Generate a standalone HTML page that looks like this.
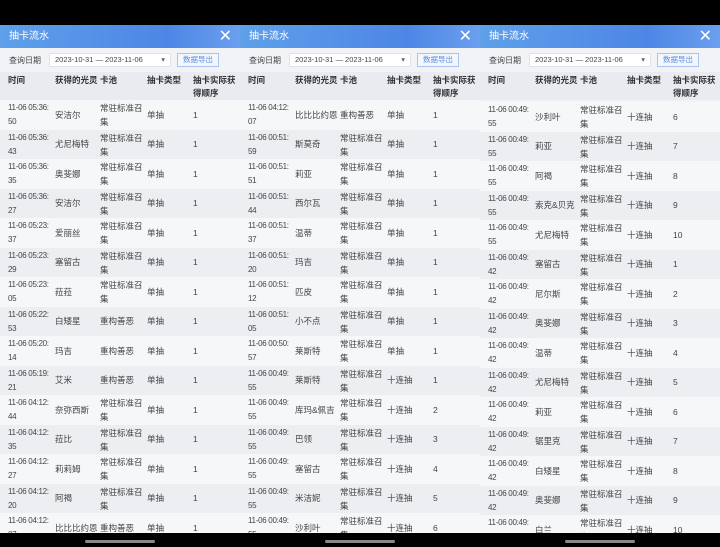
<!DOCTYPE html>
<html><head><meta charset="utf-8"><style>
*{margin:0;padding:0;box-sizing:border-box}
body{width:720px;height:547px;background:#000;position:relative;overflow:hidden;font-family:"Liberation Sans","Noto Sans CJK SC",sans-serif;color:#333}
.p{position:absolute;top:25px;width:240px;height:508px;background:#f2f3f7;overflow:hidden}
.hd{height:23px;background:linear-gradient(90deg,#5ea0ea,#4d86e6 70%,#6aa0ee);color:#fff;font-size:10px;line-height:23px;padding-left:9px;position:relative}
.hd i{position:absolute;right:8px;top:0;font-style:normal;font-size:16px;font-weight:300}
.ct{height:24px;font-size:8px;display:flex;align-items:center;padding-left:9px;color:#444}
.dt{margin-left:8px;width:122px;height:14px;background:#fff;border:1px solid #e0e2e8;font-size:7.5px;line-height:12px;padding-left:5px;position:relative}
.dt:after{content:"▾";position:absolute;right:5px;top:0;color:#666}
.bt{margin-left:6px;width:42px;height:14px;border:1px solid #a9c4ee;color:#5b8ee0;background:#f3f7fd;font-size:7.5px;line-height:12px;text-align:center}
.th{height:28px;background:#e9ebf1;position:relative;font-size:8.5px;font-weight:bold;color:#333}
.r{height:29.5px;position:relative;font-size:8.5px;color:#444}
.r:nth-child(odd){background:#f6f7f9}.r:nth-child(even){background:#eceef2}
.c{position:absolute;line-height:14px;white-space:normal}
.a{left:8px;top:1px;width:47px;font-size:8px;letter-spacing:-0.3px}.b{left:55px;white-space:nowrap}.d{left:100px;top:1px;width:45px}.e{left:147px}.f{left:193px}
.m{top:7.5px}
.th .c{top:2px;line-height:13px;font-size:8.5px;letter-spacing:0}
.bar{position:absolute;bottom:4px;width:70px;height:3px;border-radius:2px;background:#888}
</style></head><body>

<div class="p" style="left:0">
<div class="hd">抽卡流水<i>✕</i></div>
<div class="ct">查询日期<div class="dt">2023-10-31 — 2023-11-06</div><div class="bt">数据导出</div></div>
<div class="th"><span class="c a" style="top:2px">时间</span><span class="c b">获得的光灵</span><span class="c d">卡池</span><span class="c e">抽卡类型</span><span class="c f" style="width:46px">抽卡实际获得顺序</span></div>
<div>
<div class="r"><span class="c a">11-06 05:36: 50</span><span class="c b m">安洁尔</span><span class="c d">常驻标准召集</span><span class="c e m">单抽</span><span class="c f m">1</span></div>
<div class="r"><span class="c a">11-06 05:36: 43</span><span class="c b m">尤尼梅特</span><span class="c d">常驻标准召集</span><span class="c e m">单抽</span><span class="c f m">1</span></div>
<div class="r"><span class="c a">11-06 05:36: 35</span><span class="c b m">奥斐娜</span><span class="c d">常驻标准召集</span><span class="c e m">单抽</span><span class="c f m">1</span></div>
<div class="r"><span class="c a">11-06 05:36: 27</span><span class="c b m">安洁尔</span><span class="c d">常驻标准召集</span><span class="c e m">单抽</span><span class="c f m">1</span></div>
<div class="r"><span class="c a">11-06 05:23: 37</span><span class="c b m">爱丽丝</span><span class="c d">常驻标准召集</span><span class="c e m">单抽</span><span class="c f m">1</span></div>
<div class="r"><span class="c a">11-06 05:23: 29</span><span class="c b m">塞留古</span><span class="c d">常驻标准召集</span><span class="c e m">单抽</span><span class="c f m">1</span></div>
<div class="r"><span class="c a">11-06 05:23: 05</span><span class="c b m">菈菈</span><span class="c d">常驻标准召集</span><span class="c e m">单抽</span><span class="c f m">1</span></div>
<div class="r"><span class="c a">11-06 05:22: 53</span><span class="c b m">白矮星</span><span class="c d m">重构善恶</span><span class="c e m">单抽</span><span class="c f m">1</span></div>
<div class="r"><span class="c a">11-06 05:20: 14</span><span class="c b m">玛吉</span><span class="c d m">重构善恶</span><span class="c e m">单抽</span><span class="c f m">1</span></div>
<div class="r"><span class="c a">11-06 05:19: 21</span><span class="c b m">艾米</span><span class="c d m">重构善恶</span><span class="c e m">单抽</span><span class="c f m">1</span></div>
<div class="r"><span class="c a">11-06 04:12: 44</span><span class="c b m">奈弥西斯</span><span class="c d">常驻标准召集</span><span class="c e m">单抽</span><span class="c f m">1</span></div>
<div class="r"><span class="c a">11-06 04:12: 35</span><span class="c b m">菈比</span><span class="c d">常驻标准召集</span><span class="c e m">单抽</span><span class="c f m">1</span></div>
<div class="r"><span class="c a">11-06 04:12: 27</span><span class="c b m">莉莉姆</span><span class="c d">常驻标准召集</span><span class="c e m">单抽</span><span class="c f m">1</span></div>
<div class="r"><span class="c a">11-06 04:12: 20</span><span class="c b m">阿褐</span><span class="c d">常驻标准召集</span><span class="c e m">单抽</span><span class="c f m">1</span></div>
<div class="r"><span class="c a">11-06 04:12: 07</span><span class="c b m">比比比约恩</span><span class="c d m">重构善恶</span><span class="c e m">单抽</span><span class="c f m">1</span></div>
</div></div>

<div class="p" style="left:240px">
<div class="hd">抽卡流水<i>✕</i></div>
<div class="ct">查询日期<div class="dt">2023-10-31 — 2023-11-06</div><div class="bt">数据导出</div></div>
<div class="th"><span class="c a" style="top:2px">时间</span><span class="c b">获得的光灵</span><span class="c d">卡池</span><span class="c e">抽卡类型</span><span class="c f" style="width:46px">抽卡实际获得顺序</span></div>
<div>
<div class="r"><span class="c a">11-06 04:12: 07</span><span class="c b m">比比比约恩</span><span class="c d m">重构善恶</span><span class="c e m">单抽</span><span class="c f m">1</span></div>
<div class="r"><span class="c a">11-06 00:51: 59</span><span class="c b m">斯莫奇</span><span class="c d">常驻标准召集</span><span class="c e m">单抽</span><span class="c f m">1</span></div>
<div class="r"><span class="c a">11-06 00:51: 51</span><span class="c b m">莉亚</span><span class="c d">常驻标准召集</span><span class="c e m">单抽</span><span class="c f m">1</span></div>
<div class="r"><span class="c a">11-06 00:51: 44</span><span class="c b m">西尔瓦</span><span class="c d">常驻标准召集</span><span class="c e m">单抽</span><span class="c f m">1</span></div>
<div class="r"><span class="c a">11-06 00:51: 37</span><span class="c b m">温蒂</span><span class="c d">常驻标准召集</span><span class="c e m">单抽</span><span class="c f m">1</span></div>
<div class="r"><span class="c a">11-06 00:51: 20</span><span class="c b m">玛吉</span><span class="c d">常驻标准召集</span><span class="c e m">单抽</span><span class="c f m">1</span></div>
<div class="r"><span class="c a">11-06 00:51: 12</span><span class="c b m">匹皮</span><span class="c d">常驻标准召集</span><span class="c e m">单抽</span><span class="c f m">1</span></div>
<div class="r"><span class="c a">11-06 00:51: 05</span><span class="c b m">小不点</span><span class="c d">常驻标准召集</span><span class="c e m">单抽</span><span class="c f m">1</span></div>
<div class="r"><span class="c a">11-06 00:50: 57</span><span class="c b m">莱斯特</span><span class="c d">常驻标准召集</span><span class="c e m">单抽</span><span class="c f m">1</span></div>
<div class="r"><span class="c a">11-06 00:49: 55</span><span class="c b m">莱斯特</span><span class="c d">常驻标准召集</span><span class="c e m">十连抽</span><span class="c f m">1</span></div>
<div class="r"><span class="c a">11-06 00:49: 55</span><span class="c b m">库玛&amp;佩吉</span><span class="c d">常驻标准召集</span><span class="c e m">十连抽</span><span class="c f m">2</span></div>
<div class="r"><span class="c a">11-06 00:49: 55</span><span class="c b m">巴领</span><span class="c d">常驻标准召集</span><span class="c e m">十连抽</span><span class="c f m">3</span></div>
<div class="r"><span class="c a">11-06 00:49: 55</span><span class="c b m">塞留古</span><span class="c d">常驻标准召集</span><span class="c e m">十连抽</span><span class="c f m">4</span></div>
<div class="r"><span class="c a">11-06 00:49: 55</span><span class="c b m">米洁妮</span><span class="c d">常驻标准召集</span><span class="c e m">十连抽</span><span class="c f m">5</span></div>
<div class="r"><span class="c a">11-06 00:49: 55</span><span class="c b m">沙利叶</span><span class="c d">常驻标准召集</span><span class="c e m">十连抽</span><span class="c f m">6</span></div>
</div></div>

<div class="p" style="left:480px">
<div class="hd">抽卡流水<i>✕</i></div>
<div class="ct">查询日期<div class="dt">2023-10-31 — 2023-11-06</div><div class="bt">数据导出</div></div>
<div class="th"><span class="c a" style="top:2px">时间</span><span class="c b">获得的光灵</span><span class="c d">卡池</span><span class="c e">抽卡类型</span><span class="c f" style="width:46px">抽卡实际获得顺序</span></div>
<div style="margin-top:2px">
<div class="r"><span class="c a">11-06 00:49: 55</span><span class="c b m">沙利叶</span><span class="c d">常驻标准召集</span><span class="c e m">十连抽</span><span class="c f m">6</span></div>
<div class="r"><span class="c a">11-06 00:49: 55</span><span class="c b m">莉亚</span><span class="c d">常驻标准召集</span><span class="c e m">十连抽</span><span class="c f m">7</span></div>
<div class="r"><span class="c a">11-06 00:49: 55</span><span class="c b m">阿褐</span><span class="c d">常驻标准召集</span><span class="c e m">十连抽</span><span class="c f m">8</span></div>
<div class="r"><span class="c a">11-06 00:49: 55</span><span class="c b m">索克&amp;贝克</span><span class="c d">常驻标准召集</span><span class="c e m">十连抽</span><span class="c f m">9</span></div>
<div class="r"><span class="c a">11-06 00:49: 55</span><span class="c b m">尤尼梅特</span><span class="c d">常驻标准召集</span><span class="c e m">十连抽</span><span class="c f m">10</span></div>
<div class="r"><span class="c a">11-06 00:49: 42</span><span class="c b m">塞留古</span><span class="c d">常驻标准召集</span><span class="c e m">十连抽</span><span class="c f m">1</span></div>
<div class="r"><span class="c a">11-06 00:49: 42</span><span class="c b m">尼尔斯</span><span class="c d">常驻标准召集</span><span class="c e m">十连抽</span><span class="c f m">2</span></div>
<div class="r"><span class="c a">11-06 00:49: 42</span><span class="c b m">奥斐娜</span><span class="c d">常驻标准召集</span><span class="c e m">十连抽</span><span class="c f m">3</span></div>
<div class="r"><span class="c a">11-06 00:49: 42</span><span class="c b m">温蒂</span><span class="c d">常驻标准召集</span><span class="c e m">十连抽</span><span class="c f m">4</span></div>
<div class="r"><span class="c a">11-06 00:49: 42</span><span class="c b m">尤尼梅特</span><span class="c d">常驻标准召集</span><span class="c e m">十连抽</span><span class="c f m">5</span></div>
<div class="r"><span class="c a">11-06 00:49: 42</span><span class="c b m">莉亚</span><span class="c d">常驻标准召集</span><span class="c e m">十连抽</span><span class="c f m">6</span></div>
<div class="r"><span class="c a">11-06 00:49: 42</span><span class="c b m">锯里克</span><span class="c d">常驻标准召集</span><span class="c e m">十连抽</span><span class="c f m">7</span></div>
<div class="r"><span class="c a">11-06 00:49: 42</span><span class="c b m">白矮星</span><span class="c d">常驻标准召集</span><span class="c e m">十连抽</span><span class="c f m">8</span></div>
<div class="r"><span class="c a">11-06 00:49: 42</span><span class="c b m">奥斐娜</span><span class="c d">常驻标准召集</span><span class="c e m">十连抽</span><span class="c f m">9</span></div>
<div class="r"><span class="c a">11-06 00:49: 42</span><span class="c b m">白兰</span><span class="c d">常驻标准召集</span><span class="c e m">十连抽</span><span class="c f m">10</span></div>
</div></div>

<div class="bar" style="left:85px"></div>
<div class="bar" style="left:325px"></div>
<div class="bar" style="left:565px"></div>
</body></html>
